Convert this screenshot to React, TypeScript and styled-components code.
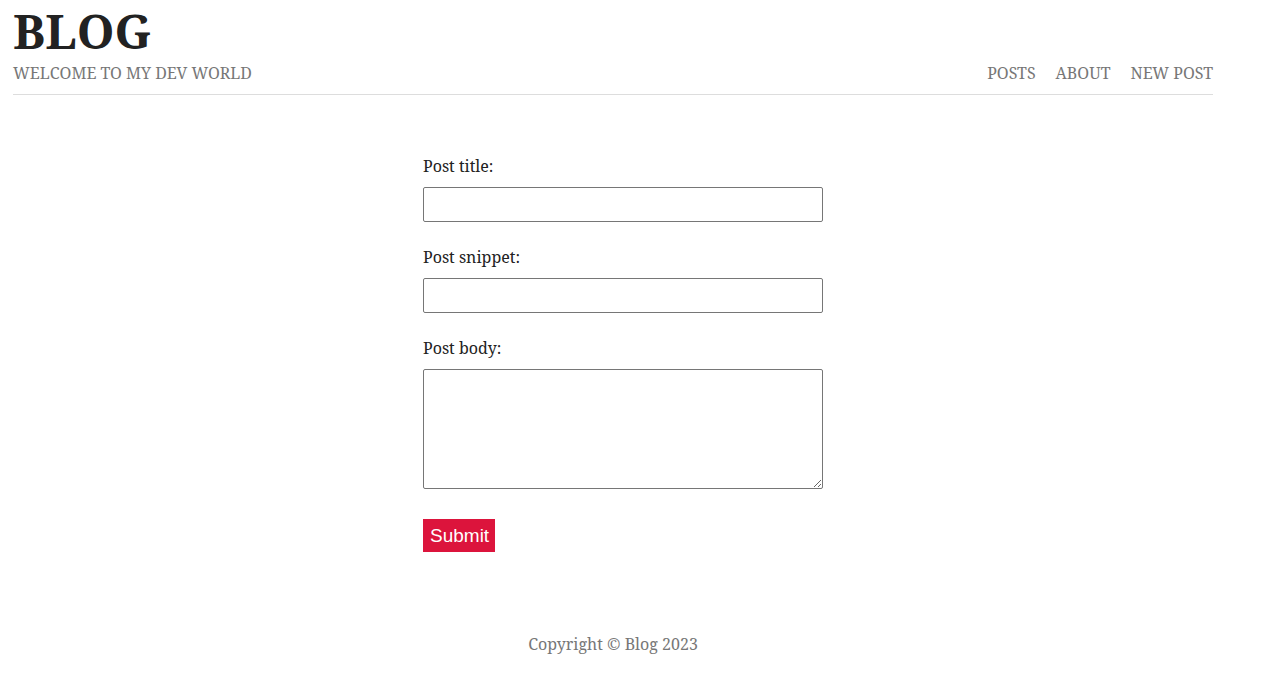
import React from "react";
import styled, { createGlobalStyle } from "styled-components";

const Global = createGlobalStyle`
  html, body { margin: 0; padding: 0; background: #fff; }
  body { font-family: "Noto Serif", "DejaVu Serif", serif; color: #222; }
`;

const Page = styled.div`
  display: flex;
  flex-direction: column;
`;

const Header = styled.header`
  width: 1200px;
  margin-left: 13px;
  display: flex;
  justify-content: space-between;
  align-items: flex-end;
  border-bottom: 1px solid #ddd;
  padding-bottom: 9px;
`;

const Brand = styled.div`
  display: flex;
  flex-direction: column;
`;

const Title = styled.h1`
  margin: 0;
  font-size: 48px;
  line-height: 61px;
  font-weight: 700;
  color: #222;
`;

const Tagline = styled.div`
  font-size: 16px;
  line-height: 24px;
  color: #777;
  text-transform: uppercase;
`;

const Nav = styled.nav`
  display: flex;
  gap: 20px;
`;

const NavLink = styled.a`
  font-size: 16px;
  line-height: 24px;
  color: #777;
  text-decoration: none;
  text-transform: uppercase;
`;

const Form = styled.form`
  width: 400px;
  margin: 59px 0 0 423px;
  display: flex;
  flex-direction: column;
`;

const Label = styled.label`
  font-size: 16px;
  line-height: 24px;
  color: #222;
  margin-bottom: 9px;
`;

const Input = styled.input`
  box-sizing: border-box;
  width: 400px;
  height: 35px;
  border: 1px solid #767676;
  border-radius: 2px;
  margin-bottom: 23px;
`;

const TextArea = styled.textarea`
  box-sizing: border-box;
  width: 400px;
  height: 120px;
  border: 1px solid #767676;
  border-radius: 2px;
  margin: 0 0 30px 0;
  display: block;
`;

const Submit = styled.button`
  align-self: flex-start;
  background: #dc143c;
  color: #fff;
  border: 0;
  height: 33px;
  padding: 0 6px 0 7px;
  font-family: "Liberation Sans", Arial, sans-serif;
  font-size: 19px;
`;

const Footer = styled.footer`
  margin-top: 80px;
  width: 1200px;
  margin-left: 13px;
  text-align: center;
  font-size: 16px;
  line-height: 24px;
  color: #777;
`;

export default function App() {
  return (
    <Page>
      <Global />
      <Header>
        <Brand>
          <Title>BLOG</Title>
          <Tagline>Welcome to my dev world</Tagline>
        </Brand>
        <Nav>
          <NavLink href="#">Posts</NavLink>
          <NavLink href="#">About</NavLink>
          <NavLink href="#">New Post</NavLink>
        </Nav>
      </Header>
      <Form onSubmit={(e) => e.preventDefault()}>
        <Label>Post title:</Label>
        <Input type="text" />
        <Label>Post snippet:</Label>
        <Input type="text" />
        <Label>Post body:</Label>
        <TextArea />
        <Submit type="submit">Submit</Submit>
      </Form>
      <Footer>Copyright © Blog 2023</Footer>
    </Page>
  );
}
